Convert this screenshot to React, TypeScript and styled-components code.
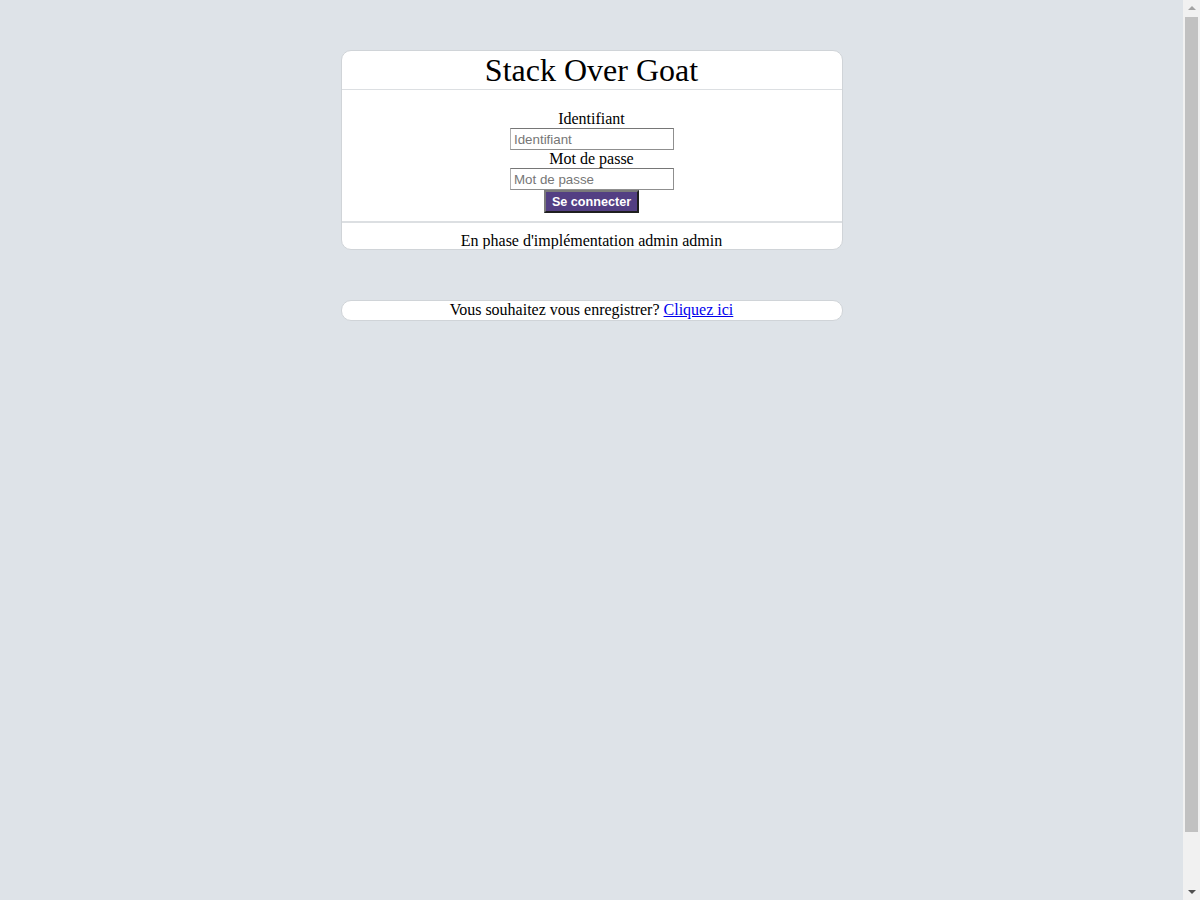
import React from "react";
import styled, { createGlobalStyle } from "styled-components";

const Global = createGlobalStyle`
  html, body { overflow: hidden; }
  body {
    margin: 0;
    background: #dee3e8;
    font-family: "Liberation Serif", "Times New Roman", serif;
    font-size: 16px;
    color: #000;
  }
`;

const Shell = styled.div`
  display: flex;
  height: 900px;
`;

const Page = styled.div`
  flex: 1;
  box-sizing: border-box;
  padding-top: 50px;
  display: flex;
  flex-direction: column;
  align-items: center;
  gap: 50px;
`;

const ScrollTrack = styled.div`
  width: 17px;
  flex: none;
  background: #f1f1f1;
  display: flex;
  flex-direction: column;
  align-items: center;
`;

const ScrollArrow = styled.div<{ $color: string }>`
  height: 16px;
  width: 17px;
  flex: none;
  display: flex;
  align-items: center;
  justify-content: center;
  svg { display: block; fill: ${(p) => p.$color}; }
`;

const ScrollThumb = styled.div`
  width: 13px;
  height: 815px;
  margin-top: 1px;
  background: #c1c1c1;
`;

const Card = styled.div`
  width: 502px;
  box-sizing: border-box;
  background: #fff;
  border: 1px solid #d0d4d8;
  border-radius: 10px;
  text-align: center;
  overflow: hidden;
`;

const Header = styled.h1`
  margin: 0;
  font-weight: normal;
  font-size: 32px;
  line-height: 38px;
  border-bottom: 1px solid #dcdfe2;
`;

const Form = styled.form`
  display: flex;
  flex-direction: column;
  align-items: center;
  padding: 20px 0 8px;
  border-bottom: 2px solid #dcdfe2;
`;

const Label = styled.label`
  display: block;
  line-height: 18px;
  height: 18px;
`;

const Input = styled.input`
  box-sizing: border-box;
  width: 164px;
  height: 22px;
  margin: 0 0 0 1px;
  padding: 1px 3px;
  border: 1px solid #8f8f8f;
  border-top-color: #767676;
  border-left-color: #b0b0b0;
  font-family: "Liberation Sans", Arial, sans-serif;
  font-size: 13.33px;
  outline: none;
  &::placeholder { color: #767676; }
`;

const Button = styled.button`
  box-sizing: border-box;
  height: 23px;
  width: 95px;
  margin-top: 0;
  padding: 0;
  background: #533f83;
  color: #fff;
  font-family: "Liberation Sans", Arial, sans-serif;
  font-weight: bold;
  font-size: 12.6px;
  border: 2px solid;
  border-color: #7a7a7a #1f1f1f #1f1f1f #7a7a7a;
  cursor: pointer;
`;

const Footer = styled.div`
  line-height: 18px;
  padding: 9px 0 0;
  height: 26px;
  box-sizing: border-box;
`;

const Banner = styled.div`
  width: 502px;
  box-sizing: border-box;
  height: 21px;
  background: #fff;
  border: 1px solid #d0d4d8;
  border-radius: 10px;
  text-align: center;
  line-height: 18px;
  a { color: #0000ee; }
`;

const Spacer = styled.div`
  flex: 1;
`;

export default function App() {
  return (
    <>
      <Global />
      <Shell>
        <Page>
          <Card>
            <Header>Stack Over Goat</Header>
            <Form onSubmit={(e) => e.preventDefault()}>
              <Label htmlFor="login">Identifiant</Label>
              <Input id="login" placeholder="Identifiant" />
              <Label htmlFor="pwd">Mot de passe</Label>
              <Input id="pwd" type="password" placeholder="Mot de passe" />
              <Button type="submit">Se connecter</Button>
            </Form>
            <Footer>En phase d'implémentation admin admin</Footer>
          </Card>
          <Banner>
            Vous souhaitez vous enregistrer? <a href="#">Cliquez ici</a>
          </Banner>
        </Page>
        <ScrollTrack>
          <ScrollArrow $color="#a3a3a3">
            <svg width="8" height="4" viewBox="0 0 8 4"><path d="M0 4 L4 0 L8 4 Z" /></svg>
          </ScrollArrow>
          <ScrollThumb />
          <Spacer />
          <ScrollArrow $color="#505050">
            <svg width="8" height="4" viewBox="0 0 8 4"><path d="M0 0 L8 0 L4 4 Z" /></svg>
          </ScrollArrow>
        </ScrollTrack>
      </Shell>
    </>
  );
}
